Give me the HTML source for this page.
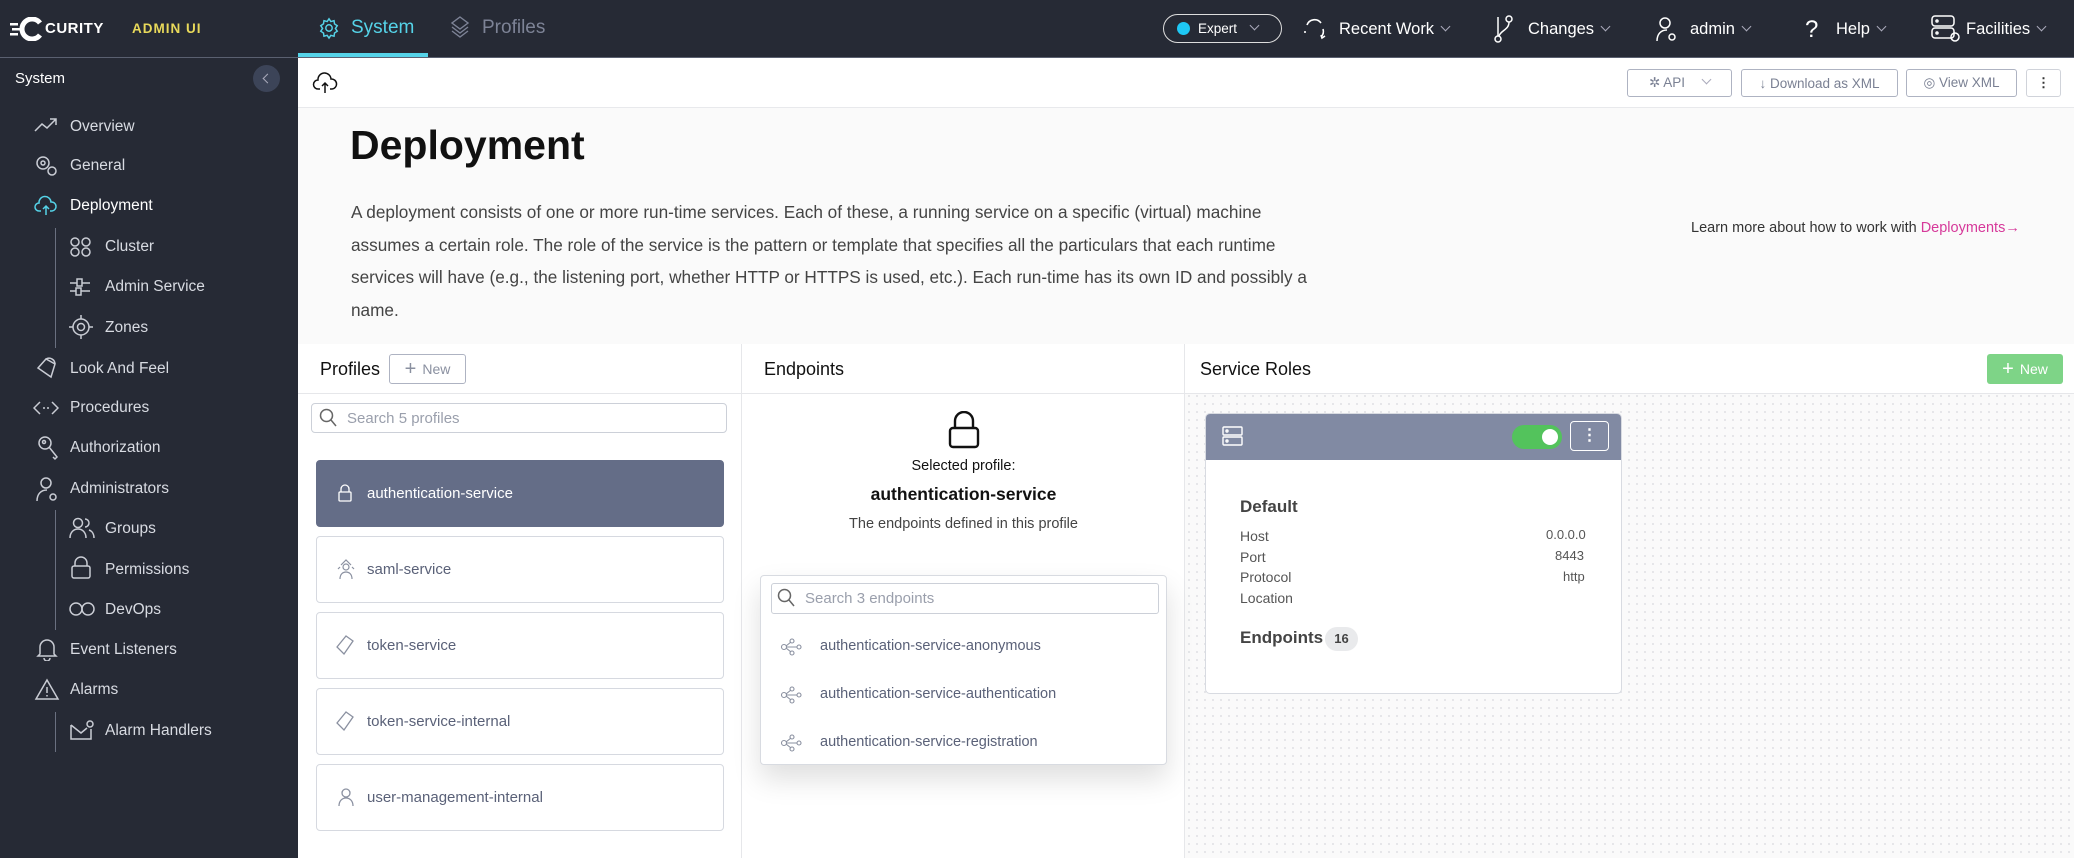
<!DOCTYPE html>
<html><head><style>
*{box-sizing:border-box;margin:0;padding:0}
body{width:2074px;height:858px;overflow:hidden;font-family:"Liberation Sans",sans-serif;background:#fafafa;position:relative;color:#222}
.a{position:absolute}
.hdr{left:0;top:0;width:2074px;height:58px;background:#262a35;border-bottom:1px solid #5a6070}
.side{left:0;top:58px;width:298px;height:800px;background:#262a35}
.nav{position:absolute;color:#d8dbe2;font-size:15.5px;white-space:nowrap}
.ic{position:absolute;stroke:#c9ccd4;fill:none;stroke-width:1.5}
.hi{color:#fff;font-size:16.5px;position:absolute;white-space:nowrap}
.chev{display:inline-block;width:7px;height:7px;border-right:1.3px solid #aab;border-bottom:1.3px solid #aab;transform:rotate(45deg);margin-left:8px;position:relative;top:-4px}
.btn{position:absolute;border:1px solid #aeb3c2;border-radius:3px;background:#fff;color:#7a8093;font-size:13.5px;display:flex;align-items:center;justify-content:center;gap:6px}
.item{position:absolute;left:316px;width:408px;height:67px;border:1px solid #d6d9e0;border-radius:4px;background:#fff;font-size:15px;color:#5a6178;display:flex;align-items:center;padding-left:50px}
.ep{position:absolute;left:820px;font-size:14.5px;color:#5a6178}
.kv{position:absolute;font-size:14px;color:#555}
</style></head><body>
<div class="a hdr"></div>
<svg class="a" style="left:10px;top:17px" width="34" height="24" viewBox="0 0 34 24"><path d="M30 6 A10 10 0 1 0 30 18" stroke="#fff" stroke-width="5" fill="none"/><rect x="0" y="6" width="8" height="2.5" fill="#fff"/><rect x="2" y="11" width="8" height="2.5" fill="#fff"/><rect x="0" y="16" width="8" height="2.5" fill="#fff"/></svg>
<div class="a" style="left:45px;top:20px;color:#fff;font-weight:bold;font-size:15px;letter-spacing:.5px">CURITY</div>
<div class="a" style="left:132px;top:21px;color:#e8d95a;font-weight:bold;font-size:13.5px;letter-spacing:1px">ADMIN UI</div>
<svg class="a" style="left:318px;top:16px" width="22" height="24" viewBox="0 0 24 24" fill="none" stroke="#55d3e8" stroke-width="1.6"><circle cx="12" cy="12" r="3.5"/><path d="M12 2l2 3 3.5-1 .5 3.5 3 2-2 3 2 3-3 2-.5 3.5-3.5-1-2 3-2-3-3.5 1-.5-3.5-3-2 2-3-2-3 3-2 .5-3.5 3.5 1z"/></svg>
<div class="a" style="left:351px;top:17px;color:#55d3e8;font-size:19px">System</div>
<div class="a" style="left:298px;top:53px;width:130px;height:4px;background:#55d3e8"></div>
<svg class="a" style="left:450px;top:15px" width="20" height="24" viewBox="0 0 20 24" fill="none" stroke="#7d8396" stroke-width="1.4"><path d="M10 2l8 6-8 6-8-6z"/><path d="M2 12l8 6 8-6"/><path d="M2 16l8 6 8-6"/></svg>
<div class="a" style="left:482px;top:17px;color:#7d8396;font-size:19px">Profiles</div>
<div class="a" style="left:1163px;top:14px;width:119px;height:29px;border:1.3px solid #ddd;border-radius:15px;color:#fff;font-size:13.5px;padding:6px 0 0 34px">Expert<span class="chev" style="margin-left:14px"></span></div>
<div class="a" style="left:1177px;top:22px;width:13px;height:13px;border-radius:50%;background:#1ec8f5"></div>
<svg class="a" style="left:1302px;top:17px" width="26" height="24" viewBox="0 0 26 24" fill="none" stroke="#fff" stroke-width="1.6"><path d="M5 8a8 8 0 0 1 14-2"/><path d="M21 12a8 8 0 0 1-2 8"/><path d="M19 18l1 3 3-2"/><path d="M3 14v2"/></svg>
<div class="hi" style="left:1339px;top:20px">Recent Work<span class="chev"></span></div>
<svg class="a" style="left:1493px;top:14px" width="22" height="30" viewBox="0 0 22 30" fill="none" stroke="#fff" stroke-width="1.5"><circle cx="5" cy="25" r="3"/><circle cx="16" cy="5" r="3"/><path d="M5 22V3"/><path d="M16 8c0 8-8 8-10 14"/></svg>
<div class="hi" style="left:1528px;top:20px">Changes<span class="chev"></span></div>
<svg class="a" style="left:1655px;top:15px" width="24" height="28" viewBox="0 0 24 28" fill="none" stroke="#fff" stroke-width="1.5"><circle cx="10" cy="8" r="5"/><path d="M2 26c0-7 4-11 10-11"/><circle cx="17" cy="22" r="3"/></svg>
<div class="hi" style="left:1690px;top:20px">admin<span class="chev"></span></div>
<div class="a" style="left:1805px;top:16px;color:#fff;font-size:24px">?</div>
<div class="hi" style="left:1836px;top:20px">Help<span class="chev"></span></div>
<svg class="a" style="left:1930px;top:14px" width="32" height="30" viewBox="0 0 32 30" fill="none" stroke="#fff" stroke-width="1.5"><rect x="2" y="2" width="22" height="10" rx="3"/><rect x="2" y="14" width="22" height="10" rx="3"/><circle cx="7" cy="7" r="1"/><circle cx="7" cy="19" r="1"/><circle cx="25" cy="23" r="4"/></svg>
<div class="hi" style="left:1966px;top:20px">Facilities<span class="chev"></span></div>

<div class="a side"></div>
<div class="a" style="left:15px;top:70px;color:#fff;font-size:15px">System</div>
<div class="a" style="left:253px;top:65px;width:27px;height:27px;border-radius:50%;background:#3c4458"></div>
<div class="a" style="left:264px;top:75px;width:7px;height:7px;border-left:1.5px solid #aab;border-bottom:1.5px solid #aab;transform:rotate(45deg)"></div>
<div class="a" style="left:55px;top:228px;width:1px;height:120px;background:#6a7080"></div>
<div class="a" style="left:55px;top:510px;width:1px;height:120px;background:#6a7080"></div>
<div class="a" style="left:55px;top:712px;width:1px;height:40px;background:#6a7080"></div>
<svg class="ic" style="left:34px;top:116px" width="24" height="20" viewBox="0 0 24 20"><path d="M1 15l7-7 5 4 9-9M16 3h6v6"/></svg>
<div class="nav" style="left:70px;top:118px">Overview</div>
<svg class="ic" style="left:34px;top:154px" width="24" height="24" viewBox="0 0 24 24"><circle cx="9" cy="9" r="6"/><circle cx="9" cy="9" r="2"/><circle cx="18" cy="17" r="4"/></svg>
<div class="nav" style="left:70px;top:157px">General</div>
<svg class="ic" style="left:34px;top:195px;stroke:#55d3e8" width="24" height="22" viewBox="0 0 24 22"><path d="M7 16H5a4 4 0 0 1 0-8 6 6 0 0 1 12-1 4.5 4.5 0 0 1 1 9h-2"/><path d="M12 20v-9M9 14l3-3 3 3"/></svg>
<div class="nav" style="left:70px;top:197px;color:#fff">Deployment</div>
<svg class="ic" style="left:69px;top:236px" width="24" height="22" viewBox="0 0 24 22"><circle cx="6" cy="6" r="4"/><circle cx="17" cy="6" r="4"/><circle cx="6" cy="16" r="4"/><circle cx="17" cy="16" r="4"/></svg>
<div class="nav" style="left:105px;top:238px">Cluster</div>
<svg class="ic" style="left:69px;top:277px" width="24" height="20" viewBox="0 0 24 20"><path d="M1 6h7M13 6h8M1 14h6M12 14h9"/><rect x="8" y="2" width="5" height="7"/><rect x="7" y="11" width="5" height="7"/></svg>
<div class="nav" style="left:105px;top:278px">Admin Service</div>
<svg class="ic" style="left:69px;top:315px" width="24" height="24" viewBox="0 0 24 24"><circle cx="12" cy="12" r="8"/><circle cx="12" cy="12" r="3.5"/><path d="M12 0v4M12 20v4M0 12h4M20 12h4"/></svg>
<div class="nav" style="left:105px;top:319px">Zones</div>
<svg class="ic" style="left:35px;top:356px" width="24" height="24" viewBox="0 0 24 24"><path d="M3 12l8-9 9 5-4 13z"/><path d="M11 3a6 6 0 0 1 9 5"/></svg>
<div class="nav" style="left:70px;top:360px">Look And Feel</div>
<svg class="ic" style="left:33px;top:398px" width="26" height="20" viewBox="0 0 26 20"><path d="M7 4l-6 6 6 6M19 4l6 6-6 6M10 10h2M14 10h2"/></svg>
<div class="nav" style="left:70px;top:399px">Procedures</div>
<svg class="ic" style="left:37px;top:435px" width="22" height="26" viewBox="0 0 22 26"><circle cx="8" cy="8" r="6"/><circle cx="7" cy="7" r="1.5"/><path d="M12 12l8 10-2 2-2-2"/></svg>
<div class="nav" style="left:70px;top:439px">Authorization</div>
<svg class="ic" style="left:35px;top:476px" width="24" height="26" viewBox="0 0 24 26"><circle cx="11" cy="7" r="5"/><path d="M2 25c0-7 4-11 10-11"/><circle cx="18" cy="21" r="3"/></svg>
<div class="nav" style="left:70px;top:480px">Administrators</div>
<svg class="ic" style="left:69px;top:517px" width="26" height="22" viewBox="0 0 26 22"><circle cx="9" cy="6" r="4.5"/><path d="M1 21c0-6 4-9 8-9s8 3 8 9M16 2a4 4 0 0 1 0 8M20 13c3 1 5 4 5 8"/></svg>
<div class="nav" style="left:105px;top:520px">Groups</div>
<svg class="ic" style="left:70px;top:556px" width="22" height="24" viewBox="0 0 22 24"><path d="M5 10V7a6 6 0 0 1 12 0v3"/><rect x="2" y="10" width="18" height="12" rx="2"/></svg>
<div class="nav" style="left:105px;top:561px">Permissions</div>
<svg class="ic" style="left:68px;top:601px" width="28" height="16" viewBox="0 0 28 16"><circle cx="8" cy="8" r="6"/><circle cx="20" cy="8" r="6"/></svg>
<div class="nav" style="left:105px;top:601px">DevOps</div>
<svg class="ic" style="left:36px;top:637px" width="22" height="24" viewBox="0 0 22 24"><path d="M4 17V10a7 7 0 0 1 14 0v7l2 2H2z"/><path d="M8 21a3 3 0 0 0 6 0"/></svg>
<div class="nav" style="left:70px;top:641px">Event Listeners</div>
<svg class="ic" style="left:34px;top:678px" width="26" height="22" viewBox="0 0 26 22"><path d="M13 2l11 19H2z"/><path d="M13 9v6M13 17v1.5"/></svg>
<div class="nav" style="left:70px;top:681px">Alarms</div>
<svg class="ic" style="left:69px;top:719px" width="26" height="22" viewBox="0 0 26 22"><path d="M2 6v14h20V10"/><path d="M2 6l10 8 6-5"/><circle cx="21" cy="5" r="3"/></svg>
<div class="nav" style="left:105px;top:722px">Alarm Handlers</div>

<div class="a" style="left:298px;top:58px;width:1776px;height:50px;background:#fff;border-bottom:1px solid #e8e9ec"></div>
<svg class="a" style="left:312px;top:72px" width="26" height="22" viewBox="0 0 26 22" fill="none" stroke="#111" stroke-width="1.5"><path d="M8 17H6a4.5 4.5 0 0 1 0-9 6.5 6.5 0 0 1 13-1 5 5 0 0 1 1 10h-2"/><path d="M13 21v-10M10 14l3-3 3 3"/></svg>
<div class="btn" style="left:1627px;top:69px;width:105px;height:28px">✲ API <span class="chev" style="border-color:#aab;margin-left:12px"></span></div>
<div class="btn" style="left:1741px;top:69px;width:157px;height:28px">↓ Download as XML</div>
<div class="btn" style="left:1906px;top:69px;width:111px;height:28px">◎ View XML</div>
<div class="btn" style="left:2026px;top:69px;width:35px;height:28px;border-color:#d0d3da;color:#333;font-weight:bold">⋮</div>

<div class="a" style="left:350px;top:122px;font-size:41px;font-weight:bold;color:#111">Deployment</div>
<div class="a" style="left:351px;top:196px;width:965px;font-size:17.2px;line-height:32.5px;color:#444">A deployment consists of one or more run-time services. Each of these, a running service on a specific (virtual) machine assumes a certain role. The role of the service is the pattern or template that specifies all the particulars that each runtime services will have (e.g., the listening port, whether HTTP or HTTPS is used, etc.). Each run-time has its own ID and possibly a name.</div>
<div class="a" style="left:1691px;top:220px;font-size:14.5px;color:#333">Learn more about how to work with <span style="color:#d6399a">Deployments→</span></div>

<div class="a" style="left:298px;top:344px;width:444px;height:514px;background:#fff;border-right:1px solid #e6e7ea"></div>
<div class="a" style="left:742px;top:344px;width:443px;height:514px;background:#fff;border-right:1px solid #e6e7ea"></div>
<div class="a" style="left:1185px;top:344px;width:889px;height:514px;background-color:#fafafa;background-image:radial-gradient(#e4e5e8 1px,transparent 1.2px);background-size:8px 8px"></div>
<div class="a" style="left:1185px;top:344px;width:889px;height:49px;background:#fff"></div>
<div class="a" style="left:298px;top:393px;width:1776px;height:1px;background:#e6e7ea"></div>

<div class="a" style="left:320px;top:359px;font-size:18px;color:#111">Profiles</div>
<div class="btn" style="left:389px;top:354px;width:77px;height:30px;color:#8a90a0;font-size:14px"><span style="font-size:20px;font-weight:200">+</span> New</div>
<div class="a" style="left:764px;top:359px;font-size:18px;color:#111">Endpoints</div>
<div class="a" style="left:1200px;top:359px;font-size:18px;color:#111">Service Roles</div>
<div class="a" style="left:1987px;top:354px;width:76px;height:30px;background:#7ed487;border-radius:3px;color:#fff;font-size:14px;display:flex;align-items:center;justify-content:center;gap:6px"><span style="font-size:20px;font-weight:200">+</span> New</div>

<div class="a" style="left:311px;top:403px;width:416px;height:30px;border:1px solid #ccd0d8;border-radius:4px;font-size:15px;color:#9a9fac;padding:6px 0 0 35px">Search 5 profiles</div>
<svg class="a" style="left:319px;top:408px" width="18" height="20" viewBox="0 0 18 20" fill="none" stroke="#666" stroke-width="1.5"><circle cx="7.5" cy="7.5" r="6"/><path d="M12 12l5 6"/></svg>
<div class="item" style="top:460px;background:#646d87;border-color:#646d87;color:#fff">authentication-service</div>
<svg class="a" style="left:338px;top:484px" width="14" height="18" viewBox="0 0 14 18" fill="none" stroke="#fff" stroke-width="1.3"><path d="M3 8V5a4 4 0 0 1 8 0v3"/><rect x="1" y="8" width="12" height="9" rx="1"/></svg>
<div class="item" style="top:536px">saml-service</div>
<svg class="a" style="left:336px;top:558px" width="20" height="22" viewBox="0 0 20 22" fill="none" stroke="#8a90a0" stroke-width="1.2"><circle cx="10" cy="9" r="3"/><path d="M4 21c0-5 3-7 6-7s6 2 6 7M5 7l5-5 5 5M2 11l2-2M18 11l-2-2"/></svg>
<div class="item" style="top:612px">token-service</div>
<svg class="a" style="left:335px;top:634px" width="20" height="22" viewBox="0 0 20 22" fill="none" stroke="#8a90a0" stroke-width="1.3"><path d="M2 13l9-11 7 5-9 13z"/></svg>
<div class="item" style="top:688px">token-service-internal</div>
<svg class="a" style="left:335px;top:710px" width="20" height="22" viewBox="0 0 20 22" fill="none" stroke="#8a90a0" stroke-width="1.3"><path d="M2 13l9-11 7 5-9 13z"/></svg>
<div class="item" style="top:764px">user-management-internal</div>
<svg class="a" style="left:337px;top:787px" width="18" height="20" viewBox="0 0 18 20" fill="none" stroke="#8a90a0" stroke-width="1.3"><circle cx="9" cy="6" r="4"/><path d="M2 19c0-5 3-8 7-8s7 3 7 8"/></svg>

<svg class="a" style="left:947px;top:411px" width="34" height="38" viewBox="0 0 34 38" fill="none" stroke="#111" stroke-width="2.4"><path d="M8 17V10a9 9 0 0 1 18 0v7"/><rect x="3" y="17" width="28" height="19" rx="3"/></svg>
<div class="a" style="left:742px;top:458px;width:443px;text-align:center;font-size:14.5px;color:#111">Selected profile:</div>
<div class="a" style="left:742px;top:484px;width:443px;text-align:center;font-size:17.5px;font-weight:bold;color:#111">authentication-service</div>
<div class="a" style="left:742px;top:516px;width:443px;text-align:center;font-size:14.5px;color:#444">The endpoints defined in this profile</div>
<div class="a" style="left:760px;top:575px;width:407px;height:190px;background:#fff;border:1px solid #d8dbe1;border-radius:4px;box-shadow:0 14px 28px rgba(0,0,0,.13)"></div>
<div class="a" style="left:771px;top:583px;width:388px;height:31px;border:1px solid #ccd0d8;border-radius:3px;font-size:15px;color:#9a9fac;padding:6px 0 0 33px">Search 3 endpoints</div>
<svg class="a" style="left:777px;top:588px" width="18" height="20" viewBox="0 0 18 20" fill="none" stroke="#666" stroke-width="1.5"><circle cx="7.5" cy="7.5" r="6"/><path d="M12 12l5 6"/></svg>
<svg class="a" style="left:780px;top:638px" width="22" height="18" viewBox="0 0 22 18" fill="none" stroke="#8a90a0" stroke-width="1.1"><circle cx="4" cy="9" r="2.5"/><circle cx="12" cy="3" r="2"/><circle cx="12" cy="15" r="2"/><circle cx="19" cy="9" r="2"/><path d="M6 8l5-4M6 10l5 4M7 9h10"/></svg>
<div class="ep" style="top:638px">authentication-service-anonymous</div>
<svg class="a" style="left:780px;top:686px" width="22" height="18" viewBox="0 0 22 18" fill="none" stroke="#8a90a0" stroke-width="1.1"><circle cx="4" cy="9" r="2.5"/><circle cx="12" cy="3" r="2"/><circle cx="12" cy="15" r="2"/><circle cx="19" cy="9" r="2"/><path d="M6 8l5-4M6 10l5 4M7 9h10"/></svg>
<div class="ep" style="top:686px">authentication-service-authentication</div>
<svg class="a" style="left:780px;top:734px" width="22" height="18" viewBox="0 0 22 18" fill="none" stroke="#8a90a0" stroke-width="1.1"><circle cx="4" cy="9" r="2.5"/><circle cx="12" cy="3" r="2"/><circle cx="12" cy="15" r="2"/><circle cx="19" cy="9" r="2"/><path d="M6 8l5-4M6 10l5 4M7 9h10"/></svg>
<div class="ep" style="top:734px">authentication-service-registration</div>

<div class="a" style="left:1205px;top:413px;width:417px;height:281px;background:#fff;border:1px solid #d8dbe1;border-radius:5px;overflow:hidden"><div style="height:46px;background:#818aa3"></div></div>
<svg class="a" style="left:1221px;top:425px" width="24" height="22" viewBox="0 0 24 22" fill="none" stroke="#fff" stroke-width="1.4"><rect x="2" y="2" width="19" height="8" rx="1"/><rect x="2" y="12" width="19" height="8" rx="1"/><circle cx="6" cy="6" r="1"/><circle cx="6" cy="16" r="1"/></svg>
<div class="a" style="left:1512px;top:425px;width:50px;height:24px;border-radius:12px;background:#53c35c"></div>
<div class="a" style="left:1542px;top:429px;width:16px;height:16px;border-radius:50%;background:#fff"></div>
<div class="a" style="left:1570px;top:421px;width:39px;height:30px;border:1.3px solid #fff;border-radius:4px;color:#fff;text-align:center;font-size:16px;line-height:27px;font-weight:bold">⋮</div>
<div class="a" style="left:1240px;top:497px;font-size:17px;font-weight:bold;color:#444">Default</div>
<div class="kv" style="left:1240px;top:528px">Host</div><div class="kv" style="left:1546px;top:527px;font-size:13px">0.0.0.0</div>
<div class="kv" style="left:1240px;top:549px">Port</div><div class="kv" style="left:1555px;top:548px;font-size:13px">8443</div>
<div class="kv" style="left:1240px;top:569px">Protocol</div><div class="kv" style="left:1563px;top:569px;font-size:13px">http</div>
<div class="kv" style="left:1240px;top:590px">Location</div>
<div class="a" style="left:1240px;top:628px;font-size:17px;font-weight:bold;color:#444">Endpoints</div>
<div class="a" style="left:1325px;top:627px;width:33px;height:24px;border-radius:12px;background:#e9eaec;font-size:13px;color:#444;text-align:center;line-height:24px;font-weight:bold">16</div>
</body></html>
